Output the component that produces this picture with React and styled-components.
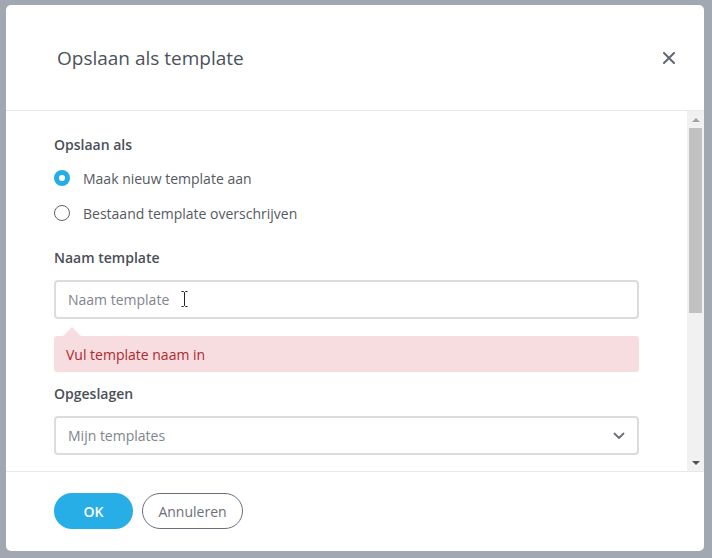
import React from 'react';
import styled, { createGlobalStyle } from 'styled-components';

const GlobalStyle = createGlobalStyle`
  html, body {
    margin: 0;
    padding: 0;
    background: #a1a8b2;
    font-family: "Open Sans", "Liberation Sans", sans-serif;
  }
  * {
    box-sizing: border-box;
  }
`;

const Backdrop = styled.div`
  width: 712px;
  height: 558px;
  padding: 5px 8px 0 6px;
  background: #a1a8b2;
`;

const Modal = styled.div`
  width: 698px;
  height: 546px;
  background: #fff;
  border-radius: 5px;
  display: flex;
  flex-direction: column;
  overflow: hidden;
`;

const Header = styled.div`
  height: 106px;
  flex: none;
  display: flex;
  align-items: center;
  justify-content: space-between;
  padding: 1px 29px 0 51px;
  border-bottom: 1px solid #e8e8e8;
`;

const Title = styled.h2`
  margin: 0;
  font-size: 19px;
  font-weight: 400;
  color: #4b525b;
`;

const CloseButton = styled.button`
  border: 0;
  background: none;
  padding: 0;
  width: 12px;
  height: 12px;
  display: flex;
  cursor: pointer;
`;

const Body = styled.div`
  height: 360px;
  flex: none;
  display: flex;
`;

const Content = styled.div`
  flex: 1;
  min-width: 0;
  overflow: hidden;
  padding: 24px 48px 0 48px;
`;

const Scrollbar = styled.div`
  width: 17px;
  flex: none;
  background: #f1f1f1;
  display: flex;
  flex-direction: column;
  align-items: center;
`;

const ScrollArrow = styled.div`
  height: 17px;
  width: 100%;
  flex: none;
  display: flex;
  align-items: center;
  justify-content: center;
  margin-top: ${p => (p.$down ? 'auto' : 0)};
`;

const ScrollThumb = styled.div`
  width: 13px;
  height: 185px;
  background: #c1c1c1;
`;

const Label = styled.div`
  font-size: 14px;
  line-height: 20px;
  font-weight: 600;
  color: #4a4f57;
  margin-bottom: ${p => (p.$gap === undefined ? 12 : p.$gap)}px;
`;

const RadioList = styled.div`
  display: flex;
  flex-direction: column;
  gap: 11px;
  margin-top: 11px;
  margin-bottom: 23px;
`;

const RadioRow = styled.label`
  display: flex;
  align-items: center;
  height: 24px;
  gap: 13px;
  font-size: 14px;
  color: #555a61;
  cursor: pointer;
`;

const RadioDot = styled.span`
  width: 16px;
  height: 16px;
  border-radius: 50%;
  flex: none;
  background: ${p => (p.$checked ? '#25ade6' : '#fff')};
  border: ${p => (p.$checked ? 'none' : '1.5px solid #5d636b')};
  display: flex;
  align-items: center;
  justify-content: center;
  &::after {
    content: '';
    display: ${p => (p.$checked ? 'block' : 'none')};
    width: 6px;
    height: 6px;
    border-radius: 50%;
    background: #fff;
  }
`;

const InputWrap = styled.div`
  position: relative;
`;

const TextInput = styled.input`
  width: 100%;
  height: 39px;
  border: 2px solid #dcdcdc;
  border-radius: 4px;
  padding: 0 12px;
  font-family: inherit;
  font-size: 14px;
  color: #444;
  outline: none;
  &::placeholder {
    color: #80858c;
  }
`;

const Cursor = styled.svg`
  position: absolute;
  left: 127px;
  top: 11px;
`;

const ErrorBox = styled.div`
  position: relative;
  margin-top: 17px;
  height: 36px;
  background: #f8dde0;
  border-radius: 3px;
  display: flex;
  align-items: center;
  padding: 0 12px;
  font-size: 14px;
  color: #b0282e;
  &::before {
    content: '';
    position: absolute;
    left: 9px;
    top: -9px;
    border-left: 9px solid transparent;
    border-right: 9px solid transparent;
    border-bottom: 9px solid #f8dde0;
  }
`;

const Field = styled.div`
  margin-top: ${p => p.$top || 0}px;
`;

const SelectBox = styled.div`
  height: 39px;
  border: 2px solid #dcdcdc;
  border-radius: 4px;
  padding: 0 12px;
  display: flex;
  align-items: center;
  justify-content: space-between;
  font-size: 14px;
  color: #80858c;
`;

const Footer = styled.div`
  flex: 1;
  border-top: 1px solid #e8e8e8;
  display: flex;
  align-items: center;
  gap: 9px;
  padding: 0 48px 1px;
`;

const Button = styled.button`
  height: 36px;
  border-radius: 18px;
  font-family: inherit;
  font-size: 14px;
  cursor: pointer;
  padding: 0;
  width: ${p => p.$width}px;
  background: ${p => (p.$primary ? '#27aee6' : '#fff')};
  color: ${p => (p.$primary ? '#fff' : '#6a7079')};
  font-weight: ${p => (p.$primary ? 600 : 400)};
  border: ${p => (p.$primary ? 'none' : '1px solid #6a7079')};
`;

export default function App() {
  return (
    <>
      <GlobalStyle />
      <Backdrop>
        <Modal>
          <Header>
            <Title>Opslaan als template</Title>
            <CloseButton aria-label="Sluiten">
              <svg width="12" height="12" viewBox="0 0 12 12">
                <path d="M1 1L11 11M11 1L1 11" stroke="#5f6873" strokeWidth="2" strokeLinecap="round" />
              </svg>
            </CloseButton>
          </Header>
          <Body>
            <Content>
              <Label $gap={0}>Opslaan als</Label>
              <RadioList>
                <RadioRow>
                  <RadioDot $checked />
                  Maak nieuw template aan
                </RadioRow>
                <RadioRow>
                  <RadioDot />
                  Bestaand template overschrijven
                </RadioRow>
              </RadioList>
              <Label>Naam template</Label>
              <InputWrap>
                <TextInput placeholder="Naam template" />
                <Cursor width="7" height="16" viewBox="0 0 7 16">
                  <path d="M0.5 0.5H2.5L3.5 1.5L4.5 0.5H6.5M3.5 1.5V14.5M0.5 15.5H2.5L3.5 14.5L4.5 15.5H6.5" stroke="#222" strokeWidth="1" fill="none" />
                </Cursor>
              </InputWrap>
              <ErrorBox>Vul template naam in</ErrorBox>
              <Field $top={12}>
                <Label>Opgeslagen</Label>
                <SelectBox>
                  Mijn templates
                  <svg width="12" height="8" viewBox="0 0 12 8">
                    <path d="M1.5 1.5L6 6L10.5 1.5" stroke="#6a7079" strokeWidth="1.8" fill="none" strokeLinecap="round" strokeLinejoin="round" />
                  </svg>
                </SelectBox>
              </Field>
            </Content>
            <Scrollbar>
              <ScrollArrow>
                <svg width="8" height="4" viewBox="0 0 8 4">
                  <path d="M0 4L4 0L8 4Z" fill="#a3a3a3" />
                </svg>
              </ScrollArrow>
              <ScrollThumb />
              <ScrollArrow $down>
                <svg width="8" height="4" viewBox="0 0 8 4">
                  <path d="M0 0L8 0L4 4Z" fill="#505050" />
                </svg>
              </ScrollArrow>
            </Scrollbar>
          </Body>
          <Footer>
            <Button $primary $width={79}>OK</Button>
            <Button $width={101}>Annuleren</Button>
          </Footer>
        </Modal>
      </Backdrop>
    </>
  );
}
